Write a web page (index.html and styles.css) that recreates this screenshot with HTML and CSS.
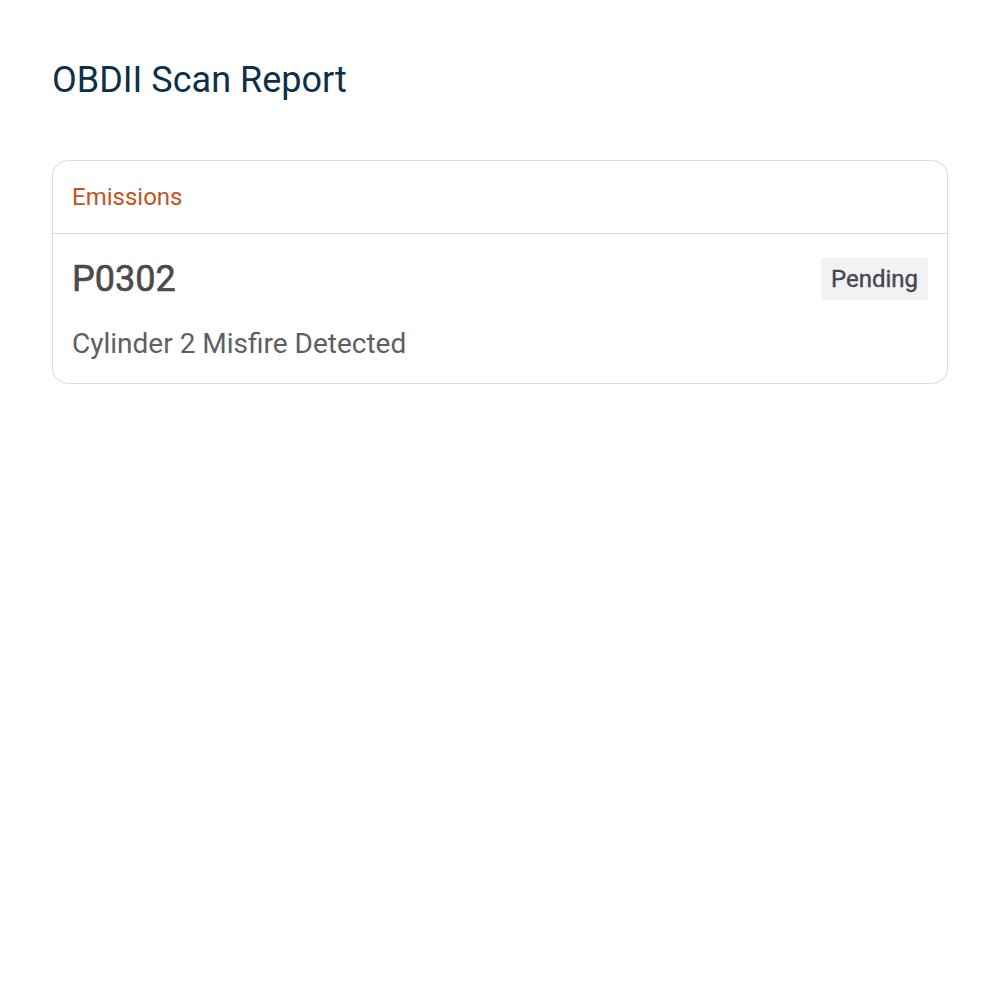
FILE: index.html
```html
<!DOCTYPE html>
<html>
<head>
<meta charset="utf-8">
<link rel="stylesheet" href="styles.css">
</head>
<body>
<main class="page">
  <h1 class="title">OBDII Scan Report</h1>
  <section class="card">
    <header class="card-head">Emissions</header>
    <div class="card-body">
      <div class="row">
        <span class="code">P0302</span>
        <span class="badge">Pending</span>
      </div>
      <p class="desc">Cylinder 2 Misfire Detected</p>
    </div>
  </section>
</main>
</body>
</html>
```
FILE: styles.css
```css
html, body {
  margin: 0;
  padding: 0;
  background: #ffffff;
}
body {
  font-family: Roboto, "Noto Sans", sans-serif;
}
.page {
  padding: 58px 52px;
}
.title {
  margin: 0;
  font-size: 36px;
  line-height: 44px;
  font-weight: 400;
  color: #0e3149;
}
.card {
  margin-top: 58px;
  border: 1px solid #dadada;
  border-radius: 16px;
  overflow: hidden;
}
.card-head {
  padding: 0 19px;
  height: 72px;
  display: flex;
  align-items: center;
  font-size: 24px;
  color: #c4541c;
  border-bottom: 1px solid #d6d6d6;
}
.card-body {
  padding: 24px 19px 22px;
}
.row {
  display: flex;
  justify-content: space-between;
  align-items: center;
}
.code {
  font-size: 36px;
  font-weight: 400;
  -webkit-text-stroke: 0.6px #4a4a4a;
  color: #4a4a4a;
  line-height: 42px;
}
.badge {
  background: #f2f2f5;
  color: #47474d;
  font-size: 24px;
  font-weight: 400;
  -webkit-text-stroke: 0.4px #47474d;
  padding: 0 10px;
  height: 42px;
  display: flex;
  align-items: center;
}
.desc {
  margin: 27px 0 0;
  font-size: 28px;
  line-height: 34px;
  color: #5f5f5f;
}
```
